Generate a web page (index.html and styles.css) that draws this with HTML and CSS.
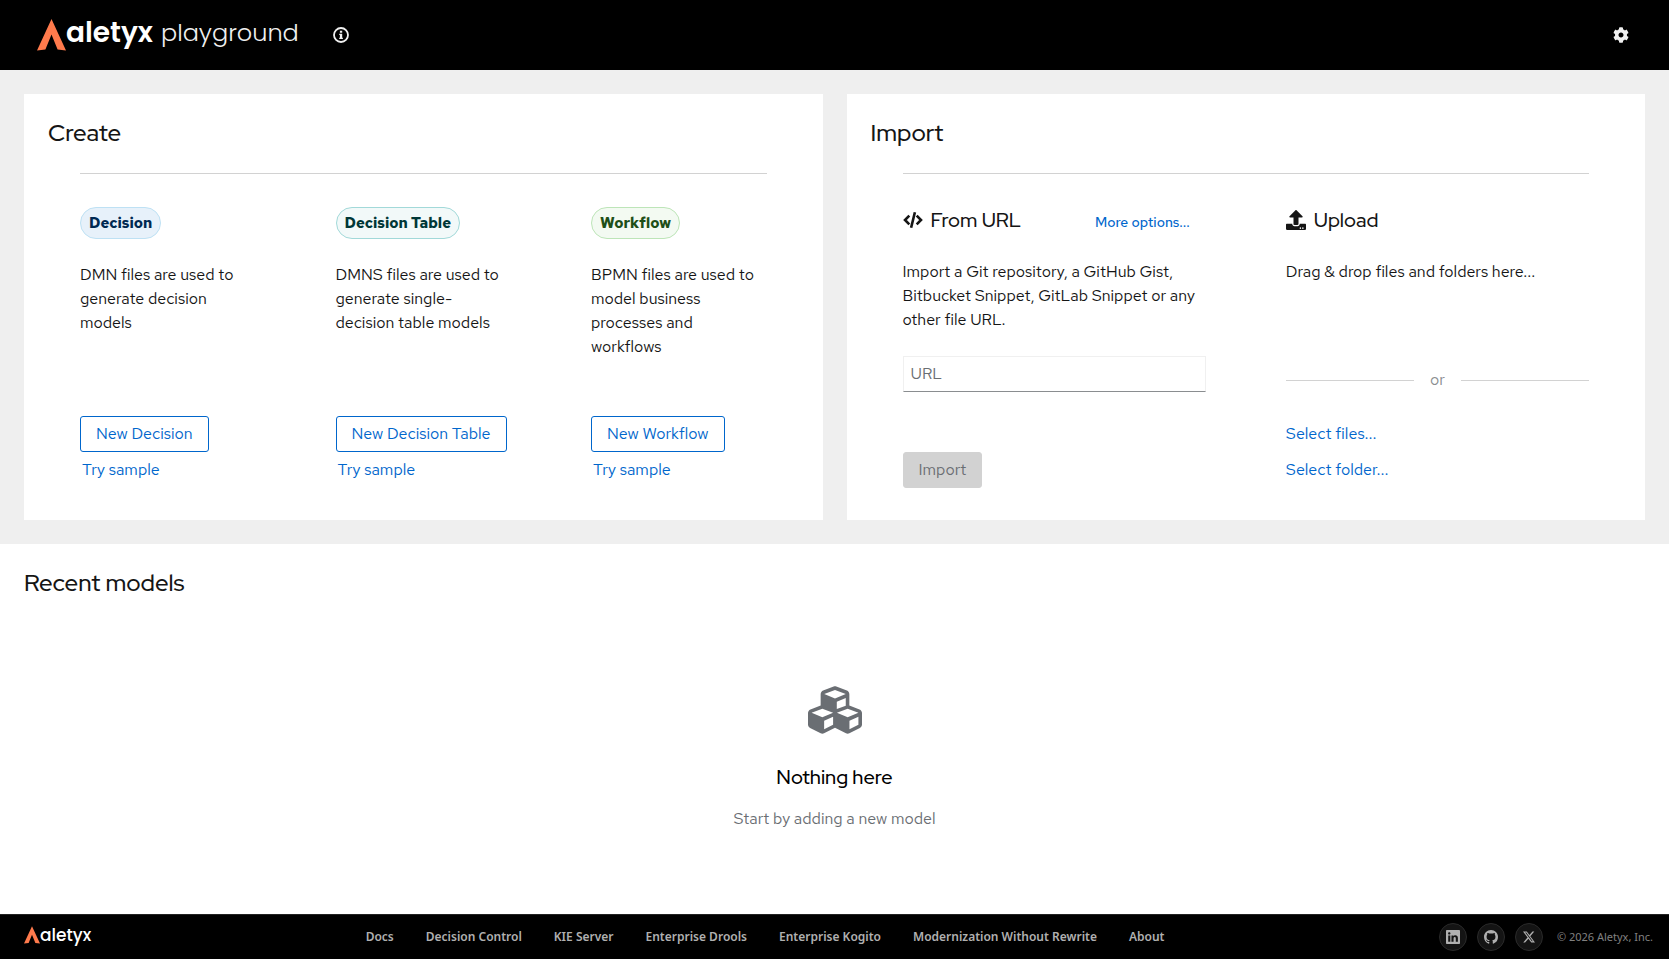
FILE: index.html
```html
<!DOCTYPE html>
<html lang="en">
<head>
<meta charset="utf-8">
<title>Aletyx Playground</title>
<link rel="stylesheet" href="styles.css">
</head>
<body>
<header class="masthead">
  <a class="brand" href="#">
    <svg class="brand-mark" viewBox="0 0 29 32" aria-hidden="true"><path d="M14.5 0 29 31.6 20.6 30.4 14.5 15.4 8.4 30.4 0 31.6Z"/></svg>
    <span class="brand-name">aletyx</span>
    <span class="brand-product">playground</span>
  </a>
  <button class="icon-button" type="button" aria-label="About">
    <svg width="16" height="16" viewBox="0 0 16 16" aria-hidden="true"><circle cx="8" cy="8" r="7" fill="none" stroke="currentColor" stroke-width="1.8"/><path fill="currentColor" d="M6.9 3.7h2.3v2H6.9zM6.2 6.7h3v4h.7v1.4H6.2v-1.4h.7V8.1h-.7z"/></svg>
  </button>
  <button class="icon-button settings" type="button" aria-label="Settings">
    <svg width="16" height="16" viewBox="0 0 512 512" aria-hidden="true"><path fill="currentColor" d="M487.4 315.7l-42.6-24.6c4.3-23.2 4.3-47 0-70.2l42.6-24.6c4.9-2.8 7.1-8.6 5.5-14-11.1-35.6-30-67.8-54.7-94.6-3.8-4.1-10-5.1-14.8-2.3L380.8 110c-17.9-15.4-38.5-27.3-60.8-35.1V25.8c0-5.6-3.9-10.5-9.4-11.7-36.7-8.2-74.3-7.8-109.2 0-5.5 1.2-9.4 6.1-9.4 11.7V75c-22.2 7.9-42.8 19.8-60.8 35.1L88.7 85.5c-4.9-2.8-11-1.9-14.8 2.3-24.7 26.7-43.6 58.9-54.7 94.6-1.7 5.4.6 11.2 5.5 14L67.3 221c-4.3 23.2-4.3 47 0 70.2l-42.6 24.6c-4.9 2.8-7.1 8.6-5.5 14 11.1 35.6 30 67.8 54.7 94.6 3.8 4.1 10 5.1 14.8 2.3l42.6-24.6c17.9 15.4 38.5 27.3 60.8 35.1v49.2c0 5.6 3.9 10.5 9.4 11.7 36.7 8.2 74.3 7.8 109.2 0 5.5-1.2 9.4-6.1 9.4-11.7v-49.2c22.2-7.9 42.8-19.8 60.8-35.1l42.6 24.6c4.9 2.8 11 1.9 14.8-2.3 24.7-26.7 43.6-58.9 54.7-94.6 1.5-5.5-.7-11.3-5.6-14.1zM256 336c-44.1 0-80-35.9-80-80s35.9-80 80-80 80 35.9 80 80-35.9 80-80 80z"/></svg>
  </button>
</header>

<main class="main">
  <div class="start">
    <section class="card">
      <h1 class="title">Create</h1>
      <div class="card-body create-grid">
        <article class="column">
          <span class="badge badge-blue">Decision</span>
          <p class="text">DMN files are used to generate decision models</p>
          <div class="actions">
            <button class="button" type="button">New Decision</button>
            <a class="link sample" href="#">Try sample</a>
          </div>
        </article>
        <article class="column">
          <span class="badge badge-cyan">Decision Table</span>
          <p class="text">DMNS files are used to generate single-decision table models</p>
          <div class="actions">
            <button class="button" type="button">New Decision Table</button>
            <a class="link sample" href="#">Try sample</a>
          </div>
        </article>
        <article class="column">
          <span class="badge badge-green">Workflow</span>
          <p class="text">BPMN files are used to model business processes and workflows</p>
          <div class="actions">
            <button class="button" type="button">New Workflow</button>
            <a class="link sample" href="#">Try sample</a>
          </div>
        </article>
      </div>
    </section>

    <section class="card">
      <h1 class="title">Import</h1>
      <div class="card-body import-grid">
        <form class="column">
          <div class="heading-row">
            <h2 class="heading">
              <svg width="20" height="20" viewBox="0 0 20 20" aria-hidden="true"><path fill="none" stroke="currentColor" stroke-width="2.6" d="M6.3 5.6 2 10l4.3 4.4M13.7 5.6 18 10l-4.3 4.4M11.9 2.2 8.1 17.8"/></svg>
              From URL
            </h2>
            <a class="link more" href="#">More options...</a>
          </div>
          <p class="text">Import a Git repository, a GitHub Gist, Bitbucket Snippet, GitLab Snippet or any other file URL.</p>
          <input class="url" type="url" placeholder="URL" aria-label="URL">
          <div class="actions">
            <button class="button button-off" type="submit" disabled>Import</button>
          </div>
        </form>
        <div class="column">
          <div class="heading-row">
            <h2 class="heading">
              <svg width="20" height="20" viewBox="0 0 512 512" aria-hidden="true"><path fill="currentColor" d="M296 384h-80c-13.3 0-24-10.7-24-24V192h-87.7c-17.8 0-26.7-21.5-14.1-34.1L242.3 5.7c7.5-7.5 19.8-7.5 27.3 0l152.2 152.2c12.6 12.6 3.7 34.1-14.1 34.1H320v168c0 13.3-10.7 24-24 24zm216-8v112c0 13.3-10.7 24-24 24H24c-13.3 0-24-10.7-24-24V376c0-13.3 10.7-24 24-24h136v8c0 30.9 25.1 56 56 56h80c30.9 0 56-25.1 56-56v-8h136c13.3 0 24 10.7 24 24zm-124 88c0-11-9-20-20-20s-20 9-20 20 9 20 20 20 20-9 20-20zm64 0c0-11-9-20-20-20s-20 9-20 20 9 20 20 20 20-9 20-20z"/></svg>
              Upload
            </h2>
          </div>
          <p class="text">Drag &amp; drop files and folders here...</p>
          <div class="actions">
            <div class="divider">or</div>
            <a class="link" href="#">Select files...</a>
            <a class="link" href="#">Select folder...</a>
          </div>
        </div>
      </div>
    </section>
  </div>

  <section class="recent">
    <h1 class="title">Recent models</h1>
    <div class="empty">
      <svg width="54" height="54" viewBox="0 0 512 512" aria-hidden="true"><path fill="currentColor" d="M488.6 250.2L392 214V105.5c0-15-9.3-28.4-23.4-33.7l-100-37.5c-8.1-3.1-17.1-3.1-25.3 0l-100 37.5c-14.1 5.3-23.4 18.7-23.4 33.7V214l-96.6 36.2C9.3 255.5 0 268.9 0 283.9V394c0 13.6 7.7 26.1 19.9 32.2l100 50c10.1 5.1 22.1 5.1 32.2 0l103.9-52 103.9 52c10.1 5.1 22.1 5.1 32.2 0l100-50c12.2-6.1 19.9-18.6 19.9-32.2V283.9c0-15-9.3-28.4-23.4-33.7zM358 214.8l-85 31.9v-68.2l85-37v73.3zM154 104.1l102-38.2 102 38.2v.6l-102 41.4-102-41.4v-.6zm84 291.1l-85 42.5v-79.1l85-38.8v75.4zm0-112l-102 41.4-102-41.4v-.6l102-38.2 102 38.2v.6zm240 112l-85 42.5v-79.1l85-38.8v75.4zm0-112l-102 41.4-102-41.4v-.6l102-38.2 102 38.2v.6z"/></svg>
      <h2 class="empty-title">Nothing here</h2>
      <p class="empty-text">Start by adding a new model</p>
    </div>
  </section>
</main>

<footer class="footer">
  <a class="footer-brand" href="#">
    <svg class="footer-mark" viewBox="0 0 29 32" aria-hidden="true"><path d="M14.5 0 29 31.6 20.6 30.4 14.5 15.4 8.4 30.4 0 31.6Z"/></svg>
    <span class="footer-name">aletyx</span>
  </a>
  <nav class="footer-nav">
    <a href="#">Docs</a>
    <a href="#">Decision Control</a>
    <a href="#">KIE Server</a>
    <a href="#">Enterprise Drools</a>
    <a href="#">Enterprise Kogito</a>
    <a href="#">Modernization Without Rewrite</a>
    <a href="#">About</a>
  </nav>
  <div class="footer-end">
    <a class="social" href="#" aria-label="LinkedIn"><svg width="14" height="14" viewBox="0 0 16 16" aria-hidden="true"><path fill="currentColor" d="M0 1.146C0 .513.526 0 1.175 0h13.65C15.474 0 16 .513 16 1.146v13.708c0 .633-.526 1.146-1.175 1.146H1.175C.526 16 0 15.487 0 14.854zm4.943 12.248V6.169H2.542v7.225zm-1.2-8.212c.837 0 1.358-.554 1.358-1.248-.015-.709-.52-1.248-1.342-1.248S2.4 3.226 2.4 3.934c0 .694.521 1.248 1.327 1.248zm4.908 8.212V9.359c0-.216.016-.432.08-.586.173-.431.568-.878 1.232-.878.869 0 1.216.662 1.216 1.634v3.865h2.401V9.25c0-2.22-1.184-3.252-2.764-3.252-1.274 0-1.845.7-2.165 1.193v.025h-.016l.016-.025V6.169h-2.4c.03.678 0 7.225 0 7.225z"/></svg></a>
    <a class="social" href="#" aria-label="GitHub"><svg width="14" height="14" viewBox="0 0 16 16" aria-hidden="true"><path fill="currentColor" d="M8 0C3.58 0 0 3.58 0 8c0 3.54 2.29 6.53 5.47 7.59.4.07.55-.17.55-.38 0-.19-.01-.82-.01-1.49-2.01.37-2.53-.49-2.69-.94-.09-.23-.48-.94-.82-1.13-.28-.15-.68-.52-.01-.53.63-.01 1.08.58 1.23.82.72 1.21 1.87.87 2.33.66.07-.52.28-.87.51-1.07-1.78-.2-3.64-.89-3.64-3.95 0-.87.31-1.59.82-2.15-.08-.2-.36-1.02.08-2.12 0 0 .67-.21 2.2.82.64-.18 1.32-.27 2-.27s1.36.09 2 .27c1.53-1.04 2.2-.82 2.2-.82.44 1.1.16 1.92.08 2.12.51.56.82 1.27.82 2.15 0 3.07-1.87 3.75-3.65 3.95.29.25.54.73.54 1.48 0 1.07-.01 1.93-.01 2.2 0 .21.15.46.55.38A8.01 8.01 0 0 0 16 8c0-4.42-3.58-8-8-8"/></svg></a>
    <a class="social" href="#" aria-label="X"><svg width="12" height="12" viewBox="0 0 16 16" aria-hidden="true"><path fill="currentColor" d="M12.6.75h2.454l-5.36 6.142L16 15.25h-4.937l-3.867-5.07-4.425 5.07H.316l5.733-6.57L0 .75h5.063l3.495 4.633L12.601.75Zm-.86 13.028h1.36L4.323 2.145H2.865z"/></svg></a>
    <span class="copyright">© 2026 Aletyx, Inc.</span>
  </div>
</footer>
</body>
</html>
```
FILE: styles.css
```css
* {
  box-sizing: border-box;
}

body {
  display: flex;
  flex-direction: column;
  min-height: 100vh;
  margin: 0;
  background: #fff;
  color: #151515;
  font: 400 16px/24px "Red Hat Text", Inter, sans-serif;
}

h1,
h2,
p {
  margin: 0;
}

p {
  font-weight: 400;
}

a {
  color: inherit;
  text-decoration: none;
}

svg {
  display: block;
  flex: none;
}

/* Masthead */
.masthead {
  display: flex;
  align-items: center;
  height: 70px;
  padding: 0 32px 0 37px;
  background: #000;
  color: #f0f0f0;
}

.brand {
  display: flex;
  align-items: center;
  margin-right: 26px;
  font-family: Poppins, Lato, sans-serif;
  line-height: 40px;
}

.brand-mark {
  width: 29px;
  height: 32px;
  fill: #ff7a4c;
}

.brand-name {
  padding-bottom: 4px;
  color: #fff;
  font-size: 28px;
  font-weight: 600;
}

.brand-product {
  margin-left: 8px;
  padding-bottom: 4px;
  font-size: 24px;
  font-weight: 300;
}

.icon-button {
  display: grid;
  place-items: center;
  width: 32px;
  height: 32px;
  padding: 0;
  border: 0;
  background: none;
  color: inherit;
}

.settings {
  margin-left: auto;
}

/* Start area */
.main {
  display: flex;
  flex: 1;
  flex-direction: column;
}

.start {
  display: grid;
  grid-template-columns: 1fr 1fr;
  gap: 24px;
  padding: 24px;
  background: #efefef;
}

.card {
  display: flex;
  flex-direction: column;
  padding: 24px 24px 32px;
  background: #fff;
}

.title {
  font-family: "Red Hat Display", Inter, sans-serif;
  font-size: 24px;
  font-weight: 500;
  line-height: 29px;
}

.card-body {
  display: grid;
  flex: 1;
  gap: 80px;
  margin: 26px 32px 0;
  padding-top: 33px;
  border-top: 1px solid #d2d2d2;
}

.create-grid {
  grid-template-columns: repeat(3, minmax(0, 1fr));
}

.import-grid {
  grid-template-columns: repeat(2, minmax(0, 1fr));
}

.column {
  display: flex;
  flex-direction: column;
  align-items: flex-start;
  gap: 24px;
  min-height: 281px;
}

.actions {
  display: flex;
  flex-direction: column;
  align-items: flex-start;
  align-self: stretch;
  margin-top: auto;
}

.badge {
  padding: 0 8px;
  border: 1px solid;
  border-radius: 16px;
  font-size: 15px;
  font-weight: 700;
  line-height: 30px;
}

.badge-blue {
  border-color: #bee1f4;
  background: #e7f1fa;
  color: #002952;
}

.badge-cyan {
  border-color: #a2d9d9;
  background: #f2f9f9;
  color: #003737;
}

.badge-green {
  border-color: #bde5b8;
  background: #f3faf2;
  color: #1e4f18;
}

.button {
  height: 36px;
  padding: 0 15px;
  border: 1px solid #06c;
  border-radius: 3px;
  background: #fff;
  color: #06c;
  font: inherit;
  white-space: nowrap;
}

.button-off {
  border-color: #d2d2d2;
  background: #d2d2d2;
  color: #6a6e73;
}

.link {
  color: #06c;
  line-height: 36px;
}

.sample {
  padding-left: 2px;
}

.heading-row {
  display: flex;
  align-items: center;
  align-self: stretch;
  justify-content: space-between;
  height: 29px;
}

.heading {
  display: flex;
  align-items: center;
  align-self: flex-start;
  gap: 8px;
  font-family: "Red Hat Display", Inter, sans-serif;
  font-size: 20px;
  font-weight: 500;
  line-height: 26px;
}

.more {
  padding-right: 16px;
  font-size: 14px;
  font-weight: 500;
}

.url {
  width: 100%;
  height: 36px;
  padding: 0 7px 2px;
  border: 1px solid #f0f0f0;
  border-bottom-color: #8a8d90;
  border-radius: 0;
  background: #fff;
  color: #151515;
  font: inherit;
}

.url::placeholder {
  color: #6a6e73;
}

.divider {
  display: flex;
  align-items: center;
  align-self: stretch;
  gap: 16px;
  margin-bottom: 24px;
  color: #8a8d90;
}

.divider::before,
.divider::after {
  flex: 1;
  height: 1px;
  background: #d2d2d2;
  content: "";
}

/* Recent models */
.recent {
  display: flex;
  flex: 1;
  flex-direction: column;
  padding: 24px;
}

.empty {
  display: flex;
  flex: 1;
  flex-direction: column;
  align-items: center;
  justify-content: center;
  padding-top: 26px;
  color: #6a6e73;
}

.empty-title {
  margin: 26px 0 16px;
  color: #000;
  font-family: "Red Hat Display", Inter, sans-serif;
  font-size: 20px;
  font-weight: 500;
  line-height: 28px;
}

/* Footer */
.footer {
  display: flex;
  align-items: center;
  justify-content: space-between;
  height: 45px;
  padding: 0 16px 0 24px;
  border-top: 1px solid #222;
  background: #000;
  color: #b0b0b0;
  font-family: "Noto Sans", sans-serif;
}

.footer-brand {
  display: flex;
  align-items: center;
  padding-bottom: 4px;
  color: #fff;
  font-family: Poppins, Lato, sans-serif;
}

.footer-mark {
  width: 16px;
  height: 18px;
  fill: #ff7a4c;
}

.footer-name {
  font-size: 17px;
  font-weight: 500;
  line-height: 20px;
}

.footer-nav {
  display: flex;
  gap: 32px;
  font-size: 12px;
  font-weight: 600;
}

.footer-end {
  display: flex;
  align-items: center;
  gap: 10px;
}

.social {
  display: grid;
  place-items: center;
  width: 28px;
  height: 28px;
  border: 1px solid #2a2a2a;
  border-radius: 50%;
  background: #141414;
}

.copyright {
  margin-left: 4px;
  color: #808080;
  font-size: 11px;
}
```
